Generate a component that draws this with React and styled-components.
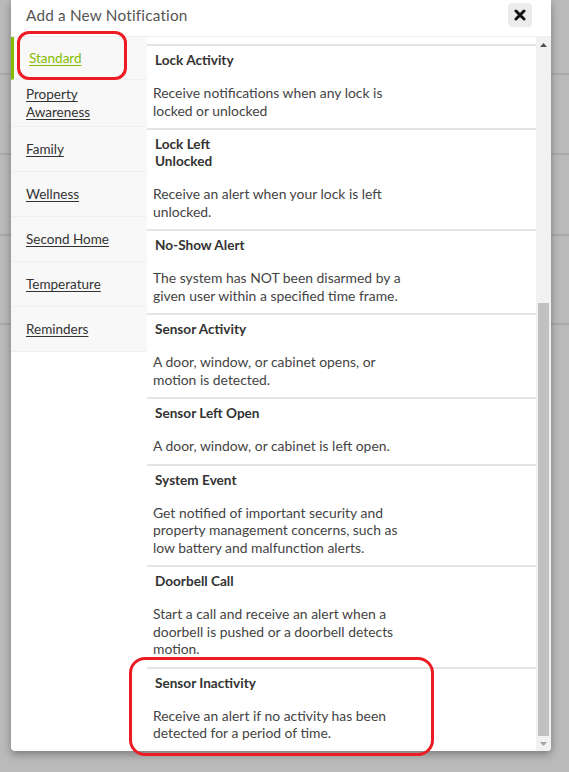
import React from 'react';
import styled, { createGlobalStyle } from 'styled-components';

const GlobalStyle = createGlobalStyle`
  html, body {
    margin: 0;
    padding: 0;
    height: 100%;
    overflow: hidden;
  }
  body {
    font-family: Lato, "Open Sans", sans-serif;
    background: #bababa;
  }
`;

const categories = [
  'Standard',
  'Property Awareness',
  'Family',
  'Wellness',
  'Second Home',
  'Temperature',
  'Reminders',
];

const notifications = [
  {
    title: ['Lock Activity'],
    text: 'Receive notifications when any lock is locked or unlocked',
  },
  {
    title: ['Lock Left', 'Unlocked'],
    text: 'Receive an alert when your lock is left unlocked.',
  },
  {
    title: ['No-Show Alert'],
    text: 'The system has NOT been disarmed by a given user within a specified time frame.',
  },
  {
    title: ['Sensor Activity'],
    text: 'A door, window, or cabinet opens, or motion is detected.',
  },
  {
    title: ['Sensor Left Open'],
    text: 'A door, window, or cabinet is left open.',
  },
  {
    title: ['System Event'],
    text: 'Get notified of important security and property management concerns, such as low battery and malfunction alerts.',
  },
  {
    title: ['Doorbell Call'],
    text: 'Start a call and receive an alert when a doorbell is pushed or a doorbell detects motion.',
  },
  {
    title: ['Sensor Inactivity'],
    text: 'Receive an alert if no activity has been detected for a period of time.',
  },
];

const Backdrop = styled.div`
  position: relative;
  width: 569px;
  height: 772px;
  background: #bababa;
  overflow: hidden;
`;

const PageRow = styled.div`
  height: ${props => props.h}px;
  border-bottom: 2px solid #a9a9a9;
`;

const Modal = styled.div`
  position: absolute;
  left: 11px;
  top: 0;
  width: 540px;
  height: 751px;
  background: #fff;
  border-radius: 0 0 4px 4px;
  box-shadow: 0 3px 9px rgba(0, 0, 0, 0.35);
  display: flex;
  flex-direction: column;
  overflow: hidden;
`;

const Header = styled.div`
  height: 37px;
  box-sizing: border-box;
  flex-shrink: 0;
  display: flex;
  align-items: center;
  justify-content: space-between;
  padding: 0 19px 7px 15px;
  border-bottom: 1px solid #efefef;
`;

const Title = styled.h4`
  margin: 0;
  font-size: 15.3px;
  font-weight: 400;
  color: #555;
  letter-spacing: 0.2px;
`;

const CloseButton = styled.button`
  width: 24px;
  height: 24px;
  border: none;
  border-radius: 4px;
  background: #ececec;
  display: flex;
  align-items: center;
  justify-content: center;
  padding: 0;
`;

const Body = styled.div`
  flex: 1;
  display: flex;
  min-height: 0;
`;

const Sidebar = styled.ul`
  width: 136px;
  flex-shrink: 0;
  margin: 0;
  padding: 0;
  list-style: none;
  align-self: flex-start;
`;

const SideItem = styled.li`
  min-height: ${props => (props.active ? '43px' : '45px')};
  box-sizing: border-box;
  display: flex;
  align-items: center;
  padding: 5px 12px 5px 15px;
  background: #f8f8f8;
  border-left: ${props => (props.active ? '3px solid #84bd00' : 'none')};
  border-bottom: 1px solid #efefef;
`;

const SideLink = styled.a`
  font-size: 13.5px;
  line-height: 18px;
  color: ${props => (props.active ? '#84bd00' : '#333')};
  text-decoration: underline;
  text-underline-offset: 2px;
`;

const ContentArea = styled.div`
  flex: 1;
  display: flex;
  min-width: 0;
`;

const List = styled.div`
  flex: 1;
  overflow: hidden;
  padding-top: 7px;
`;

const Card = styled.div`
  border-top: 2px solid #e4e4e4;
  padding: 6px 6px 9px;
`;

const CardTitle = styled.div`
  font-size: 13.6px;
  font-weight: 700;
  line-height: 17px;
  color: #333;
  margin: 0 0 15px 2px;
`;

const CardText = styled.p`
  margin: 0;
  max-width: 250px;
  font-size: 13.9px;
  line-height: 17.5px;
  color: #444;
`;

const Scrollbar = styled.div`
  width: 15px;
  flex-shrink: 0;
  background: #f1f1f1;
  display: flex;
  flex-direction: column;
  align-items: center;
`;

const Arrow = styled.div`
  height: 15px;
  width: 15px;
  display: flex;
  align-items: center;
  justify-content: center;
  flex-shrink: 0;
`;

const Track = styled.div`
  flex: 1;
  width: 100%;
  display: flex;
  flex-direction: column;
  justify-content: flex-end;
`;

const Thumb = styled.div`
  height: 433px;
  margin: 0 2px;
  background: #c1c1c1;
`;

const Annotation = styled.div`
  position: absolute;
  border: 3px solid #ed1c24;
  border-radius: ${props => props.r}px;
  pointer-events: none;
`;

const CloseIcon = () => (
  <svg width="12" height="12" viewBox="0 0 12 12">
    <path d="M2 2 L10 10 M10 2 L2 10" stroke="#111" strokeWidth="3" strokeLinecap="round" />
  </svg>
);

const TriUp = () => (
  <svg width="7" height="4" viewBox="0 0 7 4">
    <path d="M0 4 L3.5 0 L7 4 Z" fill="#505050" />
  </svg>
);

const TriDown = () => (
  <svg width="7" height="4" viewBox="0 0 7 4">
    <path d="M0 0 L3.5 4 L7 0 Z" fill="#a3a3a3" />
  </svg>
);

const App = () => {
  return (
    <Backdrop>
      <GlobalStyle />
      <PageRow h={73} />
      <PageRow h={78} />
      <PageRow h={79} />
      <PageRow h={87} />
      <Modal>
        <Header>
          <Title>Add a New Notification</Title>
          <CloseButton aria-label="Close">
            <CloseIcon />
          </CloseButton>
        </Header>
        <Body>
          <Sidebar>
            {categories.map((name, i) => (
              <SideItem key={name} active={i === 0}>
                <SideLink active={i === 0}>{name}</SideLink>
              </SideItem>
            ))}
          </Sidebar>
          <ContentArea>
            <List>
              {notifications.map(({ title, text }) => (
                <Card key={title.join(' ')}>
                  <CardTitle>
                    {title.map(line => (
                      <div key={line}>{line}</div>
                    ))}
                  </CardTitle>
                  <CardText>{text}</CardText>
                </Card>
              ))}
              <Card />
            </List>
            <Scrollbar>
              <Arrow>
                <TriUp />
              </Arrow>
              <Track>
                <Thumb />
              </Track>
              <Arrow>
                <TriDown />
              </Arrow>
            </Scrollbar>
          </ContentArea>
        </Body>
      </Modal>
      <Annotation r={12} style={{ left: 17, top: 31, width: 104, height: 43 }} />
      <Annotation r={16} style={{ left: 129, top: 657, width: 299, height: 93 }} />
    </Backdrop>
  );
};

export default App;
